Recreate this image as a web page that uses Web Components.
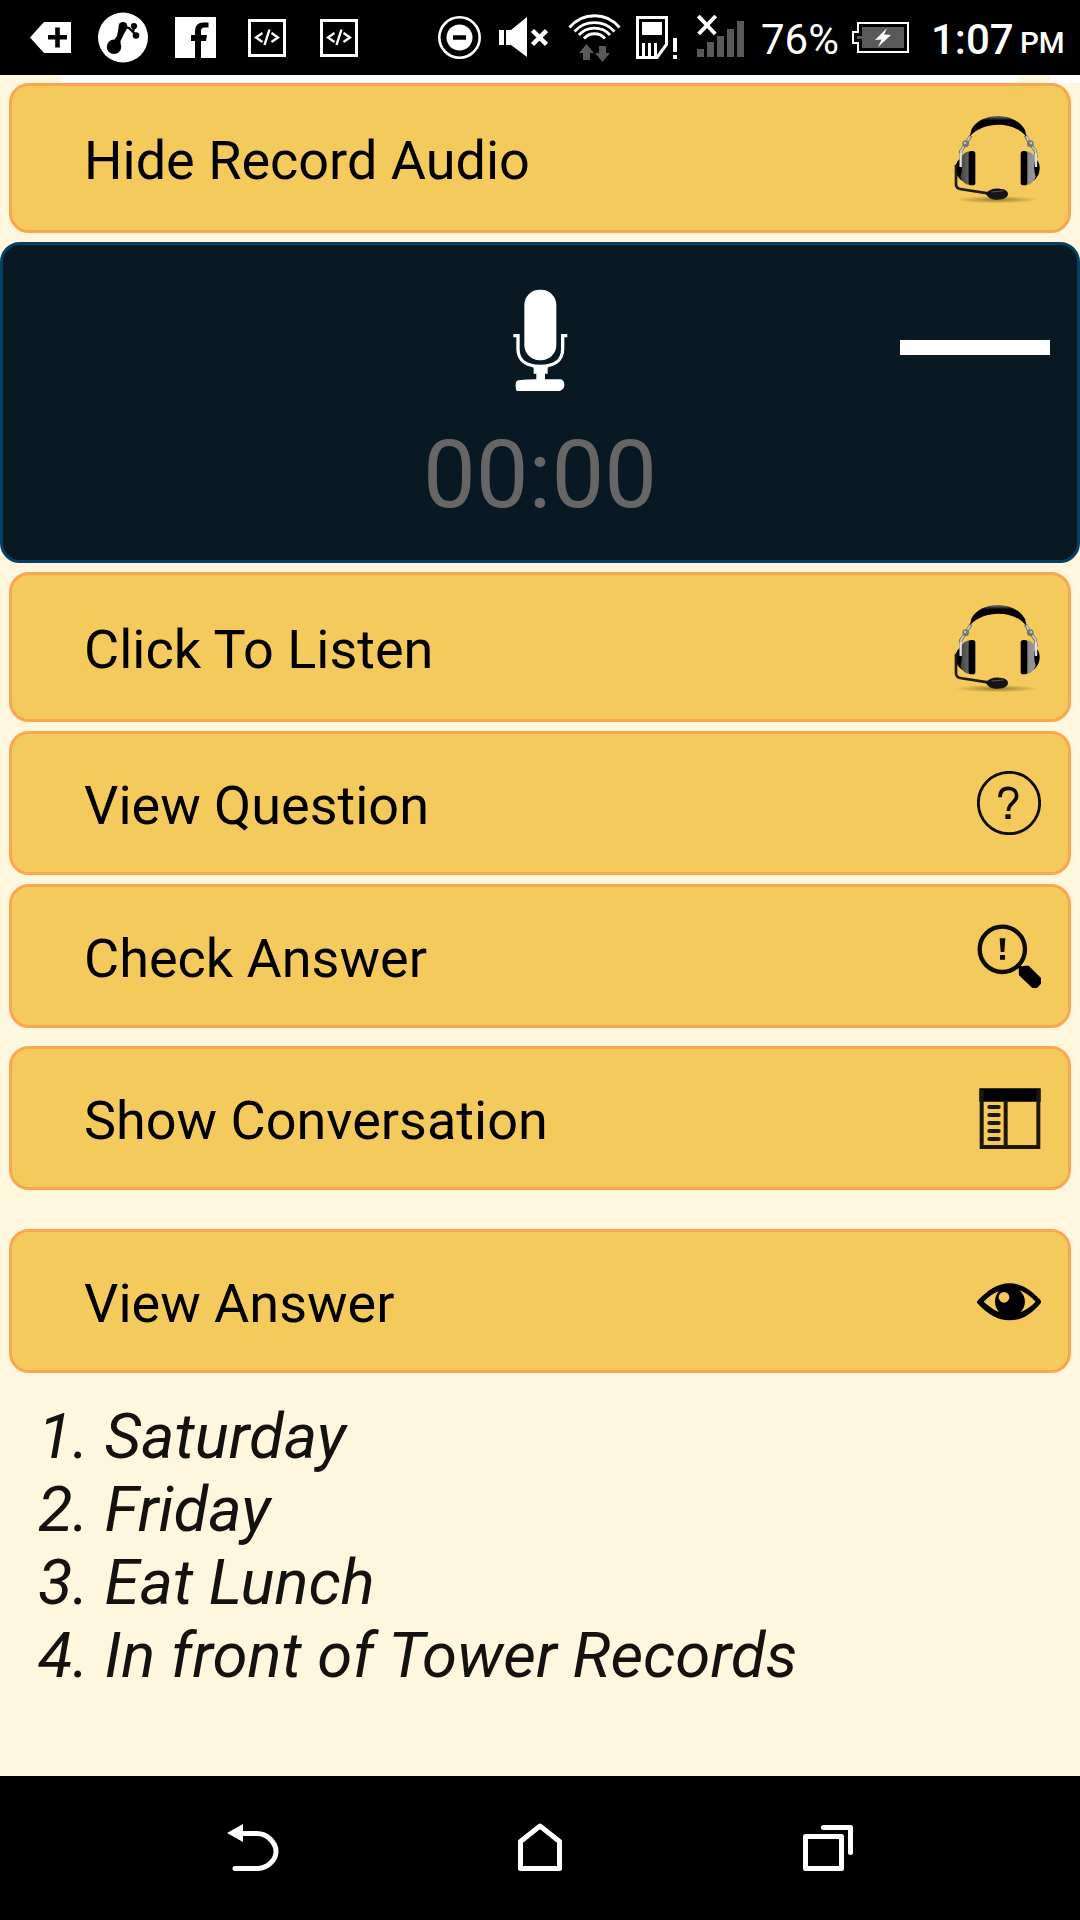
<!DOCTYPE html>
<html lang="en">
<head>
<meta charset="utf-8">
<title>Listening practice</title>
<style>
  body {
    margin: 0;
    background: #fff6de;
    font-family: Roboto, sans-serif;
  }
</style>
</head>
<body>
<phone-screen>
  <status-bar slot="status"></status-bar>
  <action-card icon="headset" size="90">Hide Record Audio</action-card>
  <record-panel time="00:00"></record-panel>
  <action-card icon="headset" size="90">Click To Listen</action-card>
  <action-card icon="question">View Question</action-card>
  <action-card icon="search">Check Answer</action-card>
  <action-card icon="book" style="margin-top: 9px">Show Conversation</action-card>
  <action-card icon="eye" style="margin-top: 39px">View Answer</action-card>
  <answer-list>
    <div>1. Saturday</div>
    <div>2. Friday</div>
    <div>3. Eat Lunch</div>
    <div>4. In front of Tower Records</div>
  </answer-list>
  <nav-bar slot="nav"></nav-bar>
</phone-screen>

<script>
const CODE = `
  <path fill="none" stroke="#fff" stroke-width="3" d="M1.5 20.5h35v35h-35z"/>
  <path fill="none" stroke="#fff" stroke-width="2.300" d="M14.500 33l-6.500 4.500 6.500 4.500M23.500 33l6.500 4.500-6.500 4.500"/>
  <path fill="none" stroke="#fff" stroke-width="2.400" d="M21.500 29.500l-5 15.500"/>`;

// name: [viewBox, markup]
const icons = {
  add: ["30 0 41 75", `<path fill="#fff" d="M30 37.500L44 22h27v31H44z"/><path stroke="#000" stroke-width="4.600" d="M48 37.300h19M57.500 27.500v20"/>`],
  nodes: ["98 0 50 75", `
    <circle cx="123" cy="37.500" r="25" fill="#fff"/>
    <circle cx="123" cy="26.300" r="4.400"/><circle cx="114" cy="46.800" r="7.200"/>
    <path d="M118.800 27l-1.800 9-2.500 3.500-6.500 4 6 9 6.500-3.500v-8l3.500-7 3.200-6z"/>
    <path fill="none" stroke="#000" stroke-width="2.200" d="M125 27.500l4 .5 7 7M134 26l-1 7"/>
    <circle cx="134" cy="26" r="3.100"/><circle cx="136" cy="35.500" r="3.300"/>`],
  facebook: ["175 0 41 75", `<path fill="#fff" d="M175 17h41v41h-15V41h5l1-6h-6v-4q0-3.500 3.500-3.500h4v-5h-5q-8.500 0-8.500 8.500v4h-4v6h4v17h-20z"/>`],
  code: ["0 0 38 75", CODE],
  dnd: ["438 0 43 75", `<circle cx="459.500" cy="37.500" r="20.200" fill="none" stroke="#fff" stroke-width="2.600"/><circle cx="459.500" cy="37.500" r="13" fill="#fff"/><path stroke="#000" stroke-width="4.500" d="M453 37.500h13"/>`],
  mute: ["499 0 49 75", `<path fill="#fff" d="M499 30h5v15h-5zM506 30h5l16-13v40l-16-12h-5z"/><path stroke="#fff" stroke-width="4.500" d="M532.500 30.500l14 14M546.500 30.500l-14 14"/>`],
  wifi: ["568 0 53 75", `
    <g fill="none" stroke="#fff" stroke-width="2.800">
      <path d="M569.500 27.500a32.500 32.500 0 0 1 50 0M574.500 31.500a27 27 0 0 1 40 0M579 35a21 21 0 0 1 31 0M584 38.500a14 14 0 0 1 21 0"/>
    </g>
    <path fill="#595959" d="M586.500 44l7.500 9h-4v7h-7v-7h-4zM602.500 62l-7.500-9h4v-7h7v7h4z"/>`],
  sim: ["636 0 42 75", `
    <path fill="none" stroke="#fff" stroke-width="3" d="M637.500 17.500h29v27l-9.500 13h-19.500z"/>
    <path fill="#fff" d="M642 22h20v13h-20zM642 43h3v13h-3zM648 43h3v13h-3zM654 43h3v13h-3zM673 38h4v14h-4zM673 55h4v4h-4z"/>`],
  signal: ["697 0 47 75", `
    <path fill="#595959" d="M697 49h7v8h-7zM707 42h7v15h-7zM717 36h7v21h-7zM727 29h7v28h-7zM737 21h7v36h-7z"/>
    <path stroke="#fff" stroke-width="4" d="M698.300 16l17 18M715.700 16l-17 18"/>`],
  battery: ["852 0 57 75", `
    <path fill="none" stroke="#fff" stroke-width="2" d="M858 23h50v29h-50v-9h-5V32h5z"/>
    <path fill="#595959" d="M862 27h42v21h-42V39h-5v-3h5z"/>
    <path fill="#fff" d="M887 28l-12 12 6.500-.5-3.500 7.500 13-12-7-.5z"/>`],

  headset: ["153 129 270 270", `
    <defs>
      <radialGradient id="shade"><stop stop-color="#7c6322" stop-opacity=".75"/><stop offset="1" stop-color="#7c6322" stop-opacity="0"/></radialGradient>
      <linearGradient id="steel"><stop stop-color="#444"/><stop offset=".3" stop-color="#999"/><stop offset=".5" stop-color="#ddd"/><stop offset=".7" stop-color="#777"/><stop offset="1" stop-color="#999"/></linearGradient>
      <linearGradient id="band" x2="0" y2="1"><stop stop-color="#777"/><stop offset=".22" stop-color="#000"/></linearGradient>
    </defs>
    <ellipse cx="290" cy="389" rx="125" ry="11" fill="url(#shade)"/>
    <path fill="none" stroke="#77736a" stroke-width="10" d="M213 196l-17 28-14 20v22M376 196l16 28 14 18 3 22"/>
    <path fill="none" stroke="#d2d0c8" stroke-width="5" d="M211 199l-16 25-12 19v20M379 199l13 25 14 17 3 20"/>
    <path fill="url(#band)" d="M210 198q2-12 5-21c14-25 45-39 79-39s66 15 81 42q3 8 3 19c-20-23-50-35-82-35s-65 11-86 34z"/>
    <circle cx="197" cy="221" r="10" fill="#77776f"/><circle cx="391" cy="221" r="10" fill="#77776f"/>
    <circle cx="195" cy="219" r="4" fill="#c4c4bc"/><circle cx="393" cy="219" r="4" fill="#c4c4bc"/>
    <path d="M187 262c-14 7-20 18-20 34s8 31 24 38zM401 262c12 7 18 18 18 32s-5 28-20 40z"/>
    <path fill="url(#steel)" d="M182 266q7-21 30-23v103q-24-3-31-25 9-24 1-55zM376 243q24 2 31 22-9 28 0 55-7 22-31 26z"/>
    <path stroke="#e2e2dc" stroke-width="7" d="M182 250v41M408 250v41"/>
    <rect x="206" y="243" width="20" height="103" rx="8"/>
    <rect x="362" y="243" width="20" height="103" rx="8"/>
    <path fill="none" stroke="#1d1b15" stroke-width="8" d="M168 284v58q0 13 12 15l84 13"/>
    <path fill="#151515" d="M257 371c10-13 25-17 42-15 17 1 25 7 25 16s-11 17-32 17-27-7-35-18z"/>
    <path stroke="#555" stroke-width="3" d="M274 366l36-3"/>`],
  question: ["111 123 192 192", `
    <circle cx="207" cy="219" r="92" fill="none" stroke="#0d0b05" stroke-width="8.500"/>
    <path fill="none" stroke="#0d0b05" stroke-width="11" d="M180 202c0-18 9-27 25-27 15 0 25 9 25 23 0 20-25 20-25 45"/>
    <rect x="196" y="253" width="16" height="14" fill="#0d0b05"/>`],
  search: ["111 582 192 192", `
    <circle cx="187" cy="658" r="68" fill="none" stroke="#0d0b05" stroke-width="13"/>
    <path fill="#0d0b05" d="M179 625h17l-3 41h-11zM180 675h15v14h-15z"/>
    <path stroke="#000" stroke-width="10" d="M231 702l16 16"/>
    <path d="M236 715q8-9 22-8h8l38 38v15l-13 14h-14l-40-38z"/>`],
  book: ["111 138 192 192", `
    <path d="M118 145h184v40H118z"/>
    <path fill="none" stroke="#1c180b" stroke-width="12" d="M125 150v171h170V150M197 180v141"/>
    <path stroke="#1c180b" stroke-width="12" stroke-linecap="round" d="M148 201h28M148 225h28M148 249h28M148 273h28M148 297h28"/>`],
  eye: ["111 687 192 192", `
    <path d="M111 784c32-34 62-54 98-54s64 20 94 52v6c-30 36-58 53-94 53s-68-19-98-53z"/>
    <path fill="#f4ca5c" d="M131 785c15-15 28-25 46-32-16 18-16 45 0 63-17-7-30-17-46-31zM287 785c-15-15-28-26-49-34 22 17 22 50 2 66 18-7 32-17 47-32z"/>
    <circle cx="192" cy="772" r="16" fill="#f4ca5c"/>`],

  mic: ["80 49 206 320", `
    <rect x="135" y="57" width="96" height="212" rx="46" fill="#fff"/>
    <path fill="none" stroke="#fff" stroke-width="10" d="M102 195h14v40c0 36 28 52 67 52s67-16 67-52v-40h14"/>
    <path fill="#fff" d="M150 277q33 18 66 0l-11 15v17h-8v17h48q10 4 10 17t-14 18H113q-4-2-4-18 0-13 8-14 26-3 54-3v-17h-8v-17z"/>`],

  back: ["226 1776 54 144", `<path fill="none" stroke="#fff" stroke-width="5" stroke-linecap="round" d="M243 1833.500h14c10 0 19 9 19 18s-9 17-19 17h-22"/><path fill="#fff" d="M227 1833l16-9v18z"/>`],
  home: ["516 1776 48 144", `<path fill="none" stroke="#fff" stroke-width="5" stroke-linejoin="round" d="M520.500 1841.500l19.500-15.500 19.500 15.500v27h-39z"/>`],
  recent: ["800 1776 54 144", `<path fill="none" stroke="#fff" stroke-width="5" stroke-linejoin="round" stroke-linecap="round" d="M805.500 1836.500h36v32h-36zM823.500 1827.500h27v25"/>`],
};

const drawIcon = (name, width) => {
  const [box, markup] = icons[name];
  const [, , w, h] = box.split(" ");
  return `<svg class="${name}" viewBox="${box}" width="${width || w}" height="${(width || w) * h / w}">${markup}</svg>`;
};

class PhoneScreen extends HTMLElement {
  connectedCallback() {
    this.attachShadow({ mode: "open" }).innerHTML = `
      <style>
        :host {
          display: flex;
          flex-direction: column;
          height: 1920px;
          overflow: hidden;
        }

        /* strip of the page header that shows above the first card */
        .strip {
          height: 8px;
          flex: none;
          background: linear-gradient(90deg, #fff6de 60px, #fff 60px 1020px, #fff6de 1020px 1050px, #fff 1050px);
        }

        main {
          flex: 1;
          display: flex;
          flex-direction: column;
        }
      </style>
      <slot name="status"></slot>
      <div class="strip"></div>
      <main><slot></slot></main>
      <slot name="nav"></slot>
    `;
  }
}

class StatusBar extends HTMLElement {
  connectedCallback() {
    this.attachShadow({ mode: "open" }).innerHTML = `
      <style>
        :host {
          display: flex;
          justify-content: space-between;
          flex: none;
          height: 75px;
          padding: 0 15px 0 30px;
          background: #000;
          color: #fff;
        }

        div {
          display: flex;
          align-items: center;
        }

        svg { display: block; flex: none; }
        .nodes, .facebook { margin-left: 27px; }
        .code { margin-left: 32px; }
        .code + .code { margin-left: 34px; }
        .mute { margin-left: 18px; }
        .wifi { margin-left: 20px; }
        .sim { margin-left: 15px; }
        .signal { margin-left: 19px; }

        span { line-height: 75px; white-space: nowrap; }
        .percent { font-size: 42px; width: 90px; margin-left: 17px; margin-right: 1px; margin-top: 3px; }
        .time { font-size: 42px; font-weight: 500; margin-left: 22px; width: 89px; margin-top: 3px; }
        .pm { font-size: 29.5px; font-weight: 500; width: 45px; margin-top: 12px; }
      </style>
      <div>
        ${["add", "nodes", "facebook", "code", "code"].map((name) => drawIcon(name)).join("")}
      </div>
      <div>
        ${["dnd", "mute", "wifi", "sim", "signal"].map((name) => drawIcon(name)).join("")}
        <span class="percent">76%</span>
        ${drawIcon("battery")}
        <span class="time">1:07</span>
        <span class="pm">PM</span>
      </div>
    `;
  }
}

class ActionCard extends HTMLElement {
  connectedCallback() {
    const size = Number(this.getAttribute("size")) || 64;

    this.attachShadow({ mode: "open" }).innerHTML = `
      <style>
        :host {
          display: flex;
          justify-content: space-between;
          align-items: center;
          flex: none;
          box-sizing: border-box;
          height: ${size > 64 ? 150 : 144}px;
          margin: 0 9px 9px;
          padding: 0 27px 0 72px;
          border: 3px solid #fba64f;
          border-radius: 20px;
          background: #f4ca5c;
          color: #000;
          font-size: 54px;
        }

        :host([icon="book"]) { margin-bottom: 0; }
        span { padding-top: 4px; }
        svg { display: block; }
      </style>
      <span><slot></slot></span>
      ${drawIcon(this.getAttribute("icon"), size)}
    `;
  }
}

class RecordPanel extends HTMLElement {
  connectedCallback() {
    this.attachShadow({ mode: "open" }).innerHTML = `
      <style>
        :host {
          display: grid;
          grid-template-columns: 1fr auto 1fr;
          grid-template-rows: 107px 1fr;
          row-gap: 27px;
          flex: none;
          box-sizing: border-box;
          height: 321px;
          margin-bottom: 9px;
          padding: 41px 27px 0;
          border: 3px solid #063f66;
          border-radius: 20px;
          background: #081923;
        }

        svg { grid-column: 2; justify-self: center; margin: 1px 0 0 1px; }

        .level {
          justify-self: end;
          align-self: center;
          width: 150px;
          height: 15px;
          margin-top: 15px;
          background: #fff;
        }

        time {
          grid-column: 1 / 4;
          text-align: center;
          font-size: 94px;
          line-height: 110px;
          color: #666;
        }
      </style>
      ${drawIcon("mic", 206 / 3)}
      <div class="level"></div>
      <time>${this.getAttribute("time")}</time>
    `;
  }
}

class AnswerList extends HTMLElement {
  connectedCallback() {
    this.attachShadow({ mode: "open" }).innerHTML = `
      <style>
        :host {
          display: block;
          margin: 18px 38px 0;
          font-size: 63.5px;
          font-style: italic;
          line-height: 73px;
          color: #14110f;
        }
      </style>
      <slot></slot>
    `;
  }
}

class NavBar extends HTMLElement {
  connectedCallback() {
    this.attachShadow({ mode: "open" }).innerHTML = `
      <style>
        :host {
          display: flex;
          justify-content: space-between;
          flex: none;
          height: 144px;
          padding: 0 226px;
          background: #000;
        }

        svg { display: block; }
      </style>
      ${drawIcon("back")}${drawIcon("home")}${drawIcon("recent")}
    `;
  }
}

customElements.define("phone-screen", PhoneScreen);
customElements.define("status-bar", StatusBar);
customElements.define("action-card", ActionCard);
customElements.define("record-panel", RecordPanel);
customElements.define("answer-list", AnswerList);
customElements.define("nav-bar", NavBar);
</script>
</body>
</html>
